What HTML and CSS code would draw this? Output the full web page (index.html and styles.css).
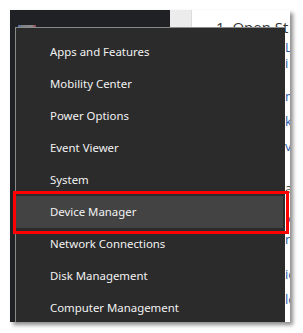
FILE: index.html
```html
<!DOCTYPE html>
<html>
<head>
<meta charset="utf-8">
<link rel="stylesheet" href="styles.css">
</head>
<body>
<div class="card">
  <div class="sidebar"><div class="logo"></div></div>
  <div class="gutter"></div>
  <div class="content">
    <div class="step">1. Open St</div>
    <div class="frags">
      <span class="f f1">L</span>
      <span class="f f2">i</span>
      <span class="f f3">n</span>
      <span class="f f4">k</span>
      <span class="f f5">v</span>
      <span class="f f6 dark">a</span>
      <span class="f f7">le</span>
      <span class="f f8">n</span>
      <span class="f f9">ic</span>
      <span class="f f10">le</span>
    </div>
  </div>
  <div class="menu">
    <div class="item">Apps and Features</div>
    <div class="item">Mobility Center</div>
    <div class="item">Power Options</div>
    <div class="item">Event Viewer</div>
    <div class="item">System</div>
    <div class="item active">Device Manager</div>
    <div class="item">Network Connections</div>
    <div class="item">Disk Management</div>
    <div class="item">Computer Management</div>
  </div>
</div>
<div class="highlight-box"></div>
</body>
</html>
```
FILE: styles.css
```css
html, body {
  margin: 0;
  padding: 0;
  background: #ffffff;
}
body {
  width: 303px;
  height: 333px;
  position: relative;
  overflow: hidden;
}
.card {
  position: relative;
  margin: 10px 0 0 10px;
  width: 280px;
  height: 312px;
  display: flex;
  overflow: hidden;
  box-shadow: 3px 3px 4px rgba(0, 0, 0, 0.45);
}
.sidebar {
  width: 160px;
  background: #1f2125;
  position: relative;
}
.logo {
  margin: 15px 0 0 8px;
  width: 18px;
  height: 2px;
  background: linear-gradient(90deg, #4a6fb0 0, #7d7f86 4px, #8b8b8f 14px, #a0404a 18px);
}
.gutter {
  width: 21px;
  background: #ececec;
  border-right: 1px solid #dcdcdc;
}
.content {
  flex: 1;
  background: #ffffff;
  display: flex;
  flex-direction: column;
  font-family: "Open Sans", "Noto Sans", sans-serif;
  overflow: hidden;
}
.step {
  margin: 9px 0 0 24px;
  font-size: 15px;
  color: #333333;
  white-space: nowrap;
  line-height: 17px;
}
.frags {
  display: flex;
  flex-direction: column;
  padding-left: 93px;
}
.f {
  display: block;
  font-size: 13px;
  line-height: 13px;
  color: #2a5aa8;
  white-space: nowrap;
}
.f.dark { color: #333; }
.f1 { margin-top: 5px; }
.f2 { margin-top: 3px; }
.f3 { margin-top: 20px; }
.f4 { margin-top: 12px; }
.f5 { margin-top: 12px; }
.f6 { margin-top: 29px; }
.f7 { margin-top: 17px; }
.f8 { margin-top: 8px; }
.f9 { margin-top: 22px; }
.f10 { margin-top: 12px; }
.menu {
  position: absolute;
  left: 5px;
  top: 17px;
  width: 270px;
  height: 300px;
  background: #2b2b2b;
  border-top: 1px solid #8a8a8a;
  border-left: 1px solid #8a8a8a;
  padding-top: 8px;
  box-sizing: border-box;
  display: flex;
  flex-direction: column;
  font-family: "Noto Sans", sans-serif;
}
.item {
  height: 32px;
  line-height: 31px;
  padding-left: 34px;
  font-size: 11.4px;
  color: #f2f2f2;
  margin-right: 2px;
}
.item.active {
  background: #434343;
}
.highlight-box {
  position: absolute;
  left: 13px;
  top: 191px;
  width: 276px;
  height: 43px;
  box-sizing: border-box;
  border: 3px solid #ff0000;
}
```
